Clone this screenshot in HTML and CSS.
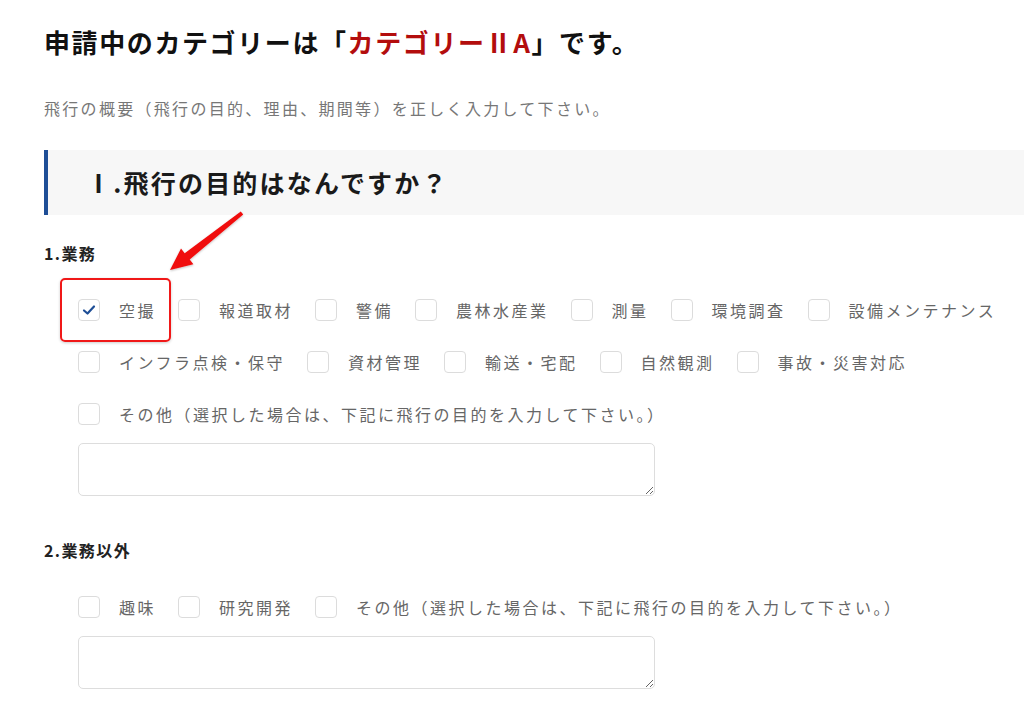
FILE: index.html
```html
<!DOCTYPE html>
<html lang="ja">
<head>
    <meta charset="UTF-8">
    <meta name="viewport" content="width=device-width, initial-scale=1.0">
    <title>飛行の目的</title>
    <link rel="stylesheet" href="styles.css">
</head>
<body>
    <div class="page">
        <h1 class="title">申請中のカテゴリーは「<span class="category">カテゴリーⅡA</span>」です。</h1>
        <p class="lead">飛行の概要（飛行の目的、理由、期間等）を正しく入力して下さい。</p>

        <h2 class="section-head">Ⅰ.飛行の目的はなんですか？</h2>

        <h3 class="group-label">1.業務</h3>
        <div class="options">
            <div class="opt-row">
                <label class="opt highlight">
                    <span class="box checked">
                        <svg width="14" height="12" viewBox="0 0 14 12"><path d="M2 6.5 L5.5 9.5 L12 2.5" fill="none" stroke="#1e4e96" stroke-width="2.2" stroke-linecap="round" stroke-linejoin="round"/></svg>
                    </span>
                    <span class="opt-text">空撮</span>
                </label>
                <label class="opt"><span class="box"></span><span class="opt-text">報道取材</span></label>
                <label class="opt"><span class="box"></span><span class="opt-text">警備</span></label>
                <label class="opt"><span class="box"></span><span class="opt-text">農林水産業</span></label>
                <label class="opt"><span class="box"></span><span class="opt-text">測量</span></label>
                <label class="opt"><span class="box"></span><span class="opt-text">環境調査</span></label>
                <label class="opt"><span class="box"></span><span class="opt-text">設備メンテナンス</span></label>
            </div>
            <div class="opt-row">
                <label class="opt"><span class="box"></span><span class="opt-text">インフラ点検・保守</span></label>
                <label class="opt"><span class="box"></span><span class="opt-text">資材管理</span></label>
                <label class="opt"><span class="box"></span><span class="opt-text">輸送・宅配</span></label>
                <label class="opt"><span class="box"></span><span class="opt-text">自然観測</span></label>
                <label class="opt"><span class="box"></span><span class="opt-text">事故・災害対応</span></label>
            </div>
            <div class="opt-row">
                <label class="opt"><span class="box"></span><span class="opt-text">その他（選択した場合は、下記に飛行の目的を入力して下さい。）</span></label>
            </div>
            <textarea class="memo"></textarea>
        </div>

        <h3 class="group-label second">2.業務以外</h3>
        <div class="options">
            <div class="opt-row first">
                <label class="opt"><span class="box"></span><span class="opt-text">趣味</span></label>
                <label class="opt"><span class="box"></span><span class="opt-text">研究開発</span></label>
                <label class="opt"><span class="box"></span><span class="opt-text">その他（選択した場合は、下記に飛行の目的を入力して下さい。）</span></label>
            </div>
            <textarea class="memo"></textarea>
        </div>

        <!-- 注釈の矢印 -->
        <svg class="arrow" width="100" height="80" viewBox="0 0 100 80">
            <defs>
                <filter id="sh" x="-20%" y="-20%" width="140%" height="140%">
                    <feDropShadow dx="0" dy="1" stdDeviation="1.2" flood-color="#000" flood-opacity="0.25"/>
                </filter>
            </defs>
            <polygon points="10,65 33.4,59.2 29.7,54.5 83.2,9.6 80.8,6.4 24.7,48.3 21,43.6" fill="#f01010" filter="url(#sh)"/>
        </svg>
    </div>
</body>
</html>
```

FILE: styles.css
```css
* {
    margin: 0;
    padding: 0;
    box-sizing: border-box;
}

body {
    background-color: #fff;
    font-family: "Noto Sans CJK JP", "Noto Sans", sans-serif;
    color: #222;
}

.page {
    position: relative;
    padding: 24px 0 0 44px;
    overflow: hidden;
    height: 712px;
}

.title {
    font-size: 26px;
    line-height: 36px;
    font-weight: 700;
    color: #111;
    letter-spacing: 1.6px;
}

.category {
    color: #b30d0d;
}

.lead {
    margin-top: 36px;
    font-size: 16px;
    line-height: 24px;
    color: #777;
    letter-spacing: 2.3px;
}

.section-head {
    margin-top: 30px;
    height: 65px;
    line-height: 65px;
    padding-left: 38px;
    background-color: #f7f7f7;
    border-left: 4px solid #1e4e96;
    font-size: 25px;
    font-weight: 700;
    color: #1a1a1a;
    letter-spacing: 2.2px;
}

.group-label {
    margin-top: 26px;
    font-size: 16px;
    line-height: 24px;
    font-weight: 700;
    color: #222;
    letter-spacing: 1.4px;
}

.group-label.second {
    margin-top: 42px;
}

.options {
    margin-left: 34px;
    margin-top: 34px;
}

.opt-row {
    display: flex;
    align-items: center;
    height: 22px;
    margin-bottom: 30px;
}

.opt-row:last-of-type {
    margin-bottom: 18px;
}

.opt {
    position: relative;
    display: flex;
    align-items: center;
    margin-right: 22px;
    white-space: nowrap;
}

.box {
    width: 22px;
    height: 22px;
    border: 1px solid #dcdcdc;
    border-radius: 4px;
    background-color: #fff;
    display: flex;
    align-items: center;
    justify-content: center;
    flex-shrink: 0;
}

.opt-text {
    margin-left: 19px;
    font-size: 16px;
    line-height: 22px;
    color: #666;
    letter-spacing: 2.5px;
}

.highlight::before {
    content: "";
    position: absolute;
    left: -18px;
    top: -21px;
    width: 107px;
    height: 60px;
    border: 2px solid #f01818;
    border-radius: 5px;
    box-shadow: 0 1px 3px rgba(0,0,0,0.2);
}

.memo {
    display: block;
    width: 577px;
    height: 53px;
    border: 1px solid #ddd;
    border-radius: 5px;
    background-color: #fff;
    font-family: inherit;
    font-size: 15px;
}

.arrow {
    position: absolute;
    left: 160px;
    top: 205px;
}
```
